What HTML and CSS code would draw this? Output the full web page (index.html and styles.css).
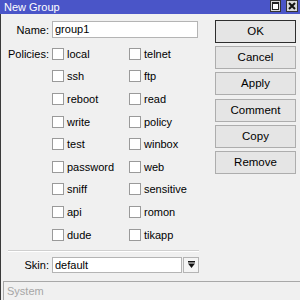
FILE: index.html
```html
<!DOCTYPE html>
<html lang="en">
<head>
    <meta charset="UTF-8">
    <title>New Group</title>
    <link rel="stylesheet" href="styles.css">
</head>
<body>
<div class="window">
    <div class="titlebar">
        <span class="title">New Group</span>
        <span class="tb-btn">
            <svg width="11" height="12" viewBox="0 0 11 12"><rect x="0.5" y="0.5" width="10" height="11" fill="#d8d8d8" stroke="#333"/><rect x="2.5" y="2.5" width="6" height="7" fill="#fff" stroke="#222"/><rect x="2" y="2" width="7" height="2" fill="#222"/></svg>
        </span>
        <span class="tb-btn">
            <svg width="12" height="12" viewBox="0 0 12 12"><rect x="0.5" y="0.5" width="11" height="11" fill="#d8d8d8" stroke="#333"/><path d="M3 3 L9 9 M9 3 L3 9" stroke="#111" stroke-width="2"/></svg>
        </span>
    </div>
    <div class="body">
        <div class="main">
            <div class="form">
                <div class="row">
                    <span class="lbl">Name:</span>
                    <div class="field name-field">group1</div>
                </div>
                <div class="policies">
                    <span class="lbl">Policies:</span>
                    <div class="checks">
                        <div class="check"><i class="box"></i>local</div>
                        <div class="check"><i class="box"></i>telnet</div>
                        <div class="check"><i class="box"></i>ssh</div>
                        <div class="check"><i class="box"></i>ftp</div>
                        <div class="check"><i class="box"></i>reboot</div>
                        <div class="check"><i class="box"></i>read</div>
                        <div class="check"><i class="box"></i>write</div>
                        <div class="check"><i class="box"></i>policy</div>
                        <div class="check"><i class="box"></i>test</div>
                        <div class="check"><i class="box"></i>winbox</div>
                        <div class="check"><i class="box"></i>password</div>
                        <div class="check"><i class="box"></i>web</div>
                        <div class="check"><i class="box"></i>sniff</div>
                        <div class="check"><i class="box"></i>sensitive</div>
                        <div class="check"><i class="box"></i>api</div>
                        <div class="check"><i class="box"></i>romon</div>
                        <div class="check"><i class="box"></i>dude</div>
                        <div class="check"><i class="box"></i>tikapp</div>
                    </div>
                </div>
                <div class="sep"></div>
                <div class="row skin-row">
                    <span class="lbl">Skin:</span>
                    <div class="field skin-field">default</div>
                    <div class="drop">
                        <svg width="7" height="7" viewBox="0 0 7 7"><rect x="0" y="0" width="7" height="1.5" fill="#111"/><path d="M0 2.5 L7 2.5 L3.5 7 Z" fill="#111"/></svg>
                    </div>
                </div>
            </div>
            <div class="buttons">
                <div class="btn default">OK</div>
                <div class="btn">Cancel</div>
                <div class="btn">Apply</div>
                <div class="btn group">Comment</div>
                <div class="btn">Copy</div>
                <div class="btn">Remove</div>
            </div>
        </div>
        <div class="status">System</div>
    </div>
</div>
</body>
</html>
```

FILE: styles.css
```css
html, body {
    margin: 0;
    padding: 0;
}

body {
    font-family: "Liberation Sans", Arial, sans-serif;
    font-size: 11px;
    color: #000;
    background: #f0f0f0;
}

.window {
    width: 300px;
    height: 300px;
    display: flex;
    flex-direction: column;
    overflow: hidden;
}

/* 标题栏 */
.titlebar {
    height: 14px;
    flex: none;
    display: flex;
    align-items: flex-start;
    padding: 0 2px 0 4px;
    background: #4a55c8;
    color: #fff;
}

.title {
    flex: 1;
    line-height: 14px;
    font-size: 11px;
}

.tb-btn {
    display: block;
    height: 12px;
    margin-left: 5px;
}

.tb-btn svg {
    display: block;
}

.body {
    flex: 1;
    display: flex;
    flex-direction: column;
    border-left: 1px solid #3a3a3a;
}

.main {
    flex: 1;
    display: flex;
}

.form {
    width: 198px;
    padding-top: 7px;
}

.row {
    display: flex;
    align-items: center;
}

.lbl {
    width: 48px;
    margin-right: 3px;
    text-align: right;
    flex: none;
}

.field {
    box-sizing: border-box;
    height: 17px;
    line-height: 15px;
    padding-left: 2px;
    border: 1px solid #b4b4b4;
    background: #fff;
}

.name-field {
    width: 146px;
}

/* 权限复选框 */
.policies {
    display: flex;
    align-items: flex-start;
    margin-top: 4.6px;
}

.policies .lbl {
    line-height: 22.6px;
}

.checks {
    display: grid;
    grid-template-columns: 77px 77px;
    grid-auto-rows: 22.6px;
}

.check {
    display: flex;
    align-items: center;
}

.box {
    box-sizing: border-box;
    width: 12px;
    height: 12px;
    margin-right: 3px;
    border: 1px solid #9a9a9a;
    background: #fff;
}

.sep {
    margin: 4px 0 0 7px;
    width: 191px;
    border-top: 1px solid #cfcfcf;
    border-bottom: 1px solid #fff;
}

.skin-row {
    margin-top: 5px;
}

.skin-field {
    width: 130px;
    height: 16px;
    line-height: 14px;
}

.drop {
    box-sizing: border-box;
    width: 16px;
    height: 16px;
    margin-left: 1px;
    border: 1px solid #b4b4b4;
    background: #f4f4f4;
    display: flex;
    align-items: center;
    justify-content: center;
}

.drop svg {
    display: block;
}

/* 右侧按钮 */
.buttons {
    width: 81px;
    margin-left: 16px;
    padding-top: 6px;
}

.btn {
    box-sizing: border-box;
    height: 23px;
    line-height: 21px;
    margin-bottom: 3px;
    border: 1px solid #adadad;
    background: #e5e5e5;
    text-align: center;
    font-size: 11.5px;
}

.btn.default {
    border-color: #2e2e2e;
}

.btn.group {
    margin-top: 4px;
}

.status {
    height: 19px;
    flex: none;
    box-sizing: border-box;
    margin-left: 2px;
    padding-left: 3px;
    line-height: 18px;
    border-top: 1px solid #a8a8a8;
    border-left: 1px solid #a8a8a8;
    color: #a6a6a6;
}
```
